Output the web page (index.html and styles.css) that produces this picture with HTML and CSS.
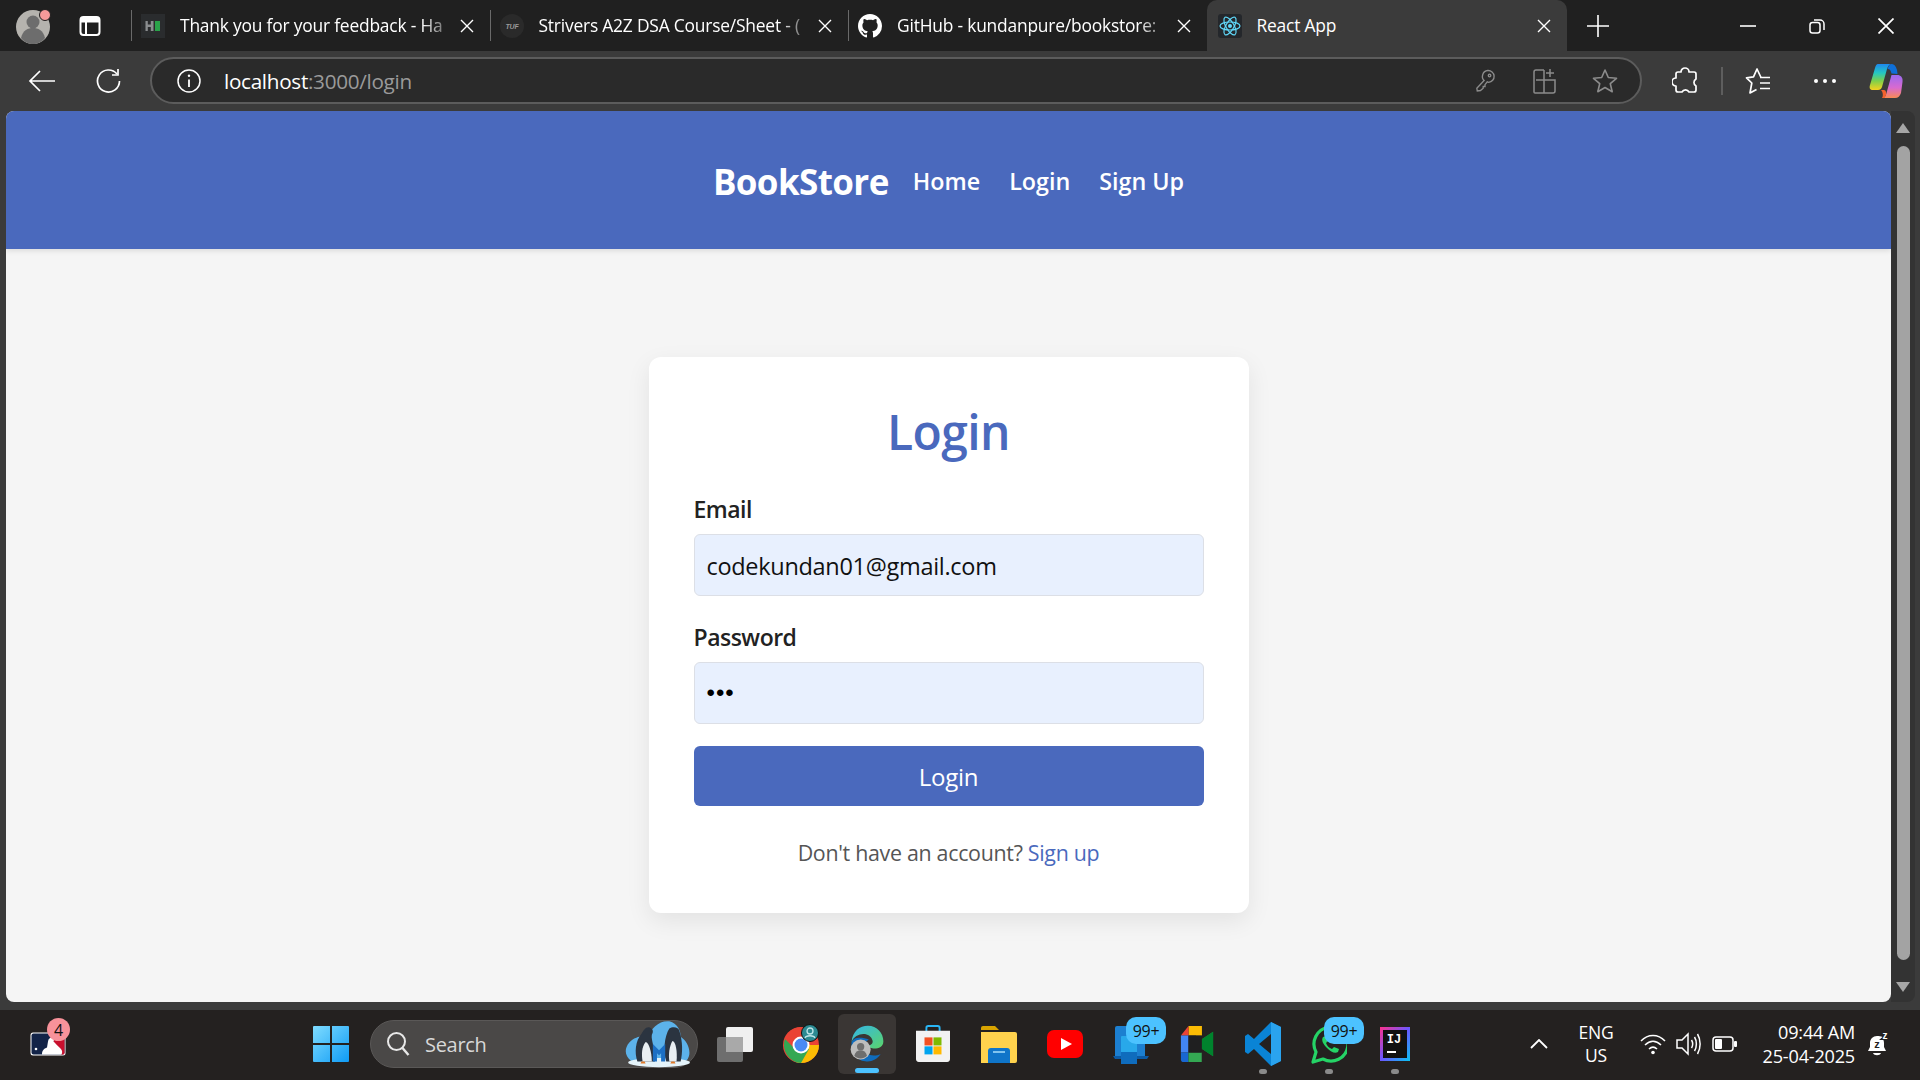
FILE: index.html
```html
<!DOCTYPE html>
<html lang="en">
<head>
<meta charset="utf-8">
<title>React App</title>
<link rel="stylesheet" href="styles.css">
</head>
<body>
<div class="window">
  <div class="tabstrip">
    <div class="profile">
      <svg width="38" height="38" viewBox="0 0 38 38"><circle cx="18" cy="20" r="17" fill="#b5b3ae"/><circle cx="18" cy="15" r="6.500" fill="#6d6d6d"/><path d="M6 31c2-8 7-10 12-10s10 2 12 10c-3 4-8 6-12 6s-9-2-12-6z" fill="#6d6d6d"/><circle cx="30" cy="8" r="5.500" fill="#f69a9a" stroke="#202020"/></svg>
    </div>
    <div class="vtabs"><svg width="24" height="24" viewBox="0 0 24 24" fill="none" stroke="#fff" stroke-width="2"><rect x="2.500" y="3" width="19" height="18" rx="3"/><path d="M8 8v13M3 7.500h18" /><rect x="3" y="3.500" width="18" height="4" fill="#fff" stroke="none"/></svg></div>
    <div class="tabs">
      <div class="tab">
        <svg class="fav" width="24" height="24" viewBox="0 0 24 24"><rect width="24" height="24" fill="#2a2c2e"/><rect x="4.500" y="7" width="8" height="10" fill="#8a8d8f"/><rect x="6.800" y="7" width="3" height="3.500" fill="#2a2c2e"/><rect x="6.800" y="13" width="3" height="4" fill="#2a2c2e"/><rect x="14" y="7" width="5" height="10" fill="#2aa34a"/></svg>
        <span class="tab-title">Thank you for your feedback - Ha</span>
        <svg class="x" width="14" height="14" viewBox="0 0 14 14"><path d="M1 1l12 12M13 1L1 13" stroke="#fff" stroke-width="1.400"/></svg>
      </div>
      <div class="tab">
        <svg class="fav" width="24" height="24" viewBox="0 0 24 24"><circle cx="12" cy="12" r="12" fill="#2a2a2a"/><text x="12" y="15" text-anchor="middle" class="tuf">TUF</text></svg>
        <span class="tab-title">Strivers A2Z DSA Course/Sheet - (</span>
        <svg class="x" width="14" height="14" viewBox="0 0 14 14"><path d="M1 1l12 12M13 1L1 13" stroke="#fff" stroke-width="1.400"/></svg>
      </div>
      <div class="tab">
        <svg class="fav" width="24" height="24" viewBox="0 0 16 16"><path fill="#fff" d="M8 0C3.580 0 0 3.580 0 8c0 3.540 2.290 6.530 5.470 7.590.4.070.55-.17.55-.38 0-.19-.01-.82-.01-1.490-2.010.37-2.530-.49-2.690-.94-.09-.23-.48-.94-.82-1.130-.28-.15-.68-.52-.01-.53.63-.01 1.080.58 1.230.82.720 1.210 1.870.87 2.330.66.070-.52.280-.87.510-1.070-1.780-.2-3.640-.89-3.640-3.950 0-.87.310-1.590.820-2.150-.08-.2-.36-1.020.08-2.120 0 0 .67-.21 2.200.82.640-.18 1.320-.27 2-.27s1.360.09 2 .27c1.530-1.040 2.200-.82 2.200-.82.440 1.100.16 1.920.08 2.120.51.560.82 1.270.82 2.150 0 3.070-1.870 3.750-3.650 3.950.290.250.540.730.540 1.480 0 1.070-.01 1.930-.01 2.200 0 .210.150.460.550.380A8.010 8.010 0 0 0 16 8c0-4.420-3.580-8-8-8z"/></svg>
        <span class="tab-title">GitHub - kundanpure/bookstore:</span>
        <svg class="x" width="14" height="14" viewBox="0 0 14 14"><path d="M1 1l12 12M13 1L1 13" stroke="#fff" stroke-width="1.400"/></svg>
      </div>
      <div class="tab tab-active">
        <svg class="fav" width="24" height="24" viewBox="0 0 24 24"><rect width="24" height="24" rx="3" fill="#24272b"/><g fill="none" stroke="#61dafb" stroke-width="1.200"><ellipse cx="12" cy="12" rx="10" ry="4"/><ellipse cx="12" cy="12" rx="10" ry="4" transform="rotate(60 12 12)"/><ellipse cx="12" cy="12" rx="10" ry="4" transform="rotate(120 12 12)"/></g><circle cx="12" cy="12" r="2" fill="#61dafb"/></svg>
        <span class="tab-title tab-title-full">React App</span>
        <svg class="x" width="14" height="14" viewBox="0 0 14 14"><path d="M1 1l12 12M13 1L1 13" stroke="#fff" stroke-width="1.400"/></svg>
      </div>
    </div>
    <svg class="newtab" width="22" height="22" viewBox="0 0 22 22"><path d="M11 0v22M0 11h22" stroke="#fff" stroke-width="1.600"/></svg>
    <div class="winctl">
      <svg width="16" height="16" viewBox="0 0 16 16"><path d="M0 8h16" stroke="#fff" stroke-width="1.600"/></svg>
      <svg width="16" height="16" viewBox="0 0 16 16" fill="none" stroke="#fff" stroke-width="1.500"><rect x="1" y="4.500" width="10" height="10.500" rx="2.500"/><path d="M5 2h6a4 4 0 0 1 4 4v6"/></svg>
      <svg width="16" height="16" viewBox="0 0 16 16"><path d="M.5.5l15 15M15.500.5l-15 15" stroke="#fff" stroke-width="1.700"/></svg>
    </div>
  </div>

  <div class="toolbar">
    <svg class="tb-back" width="28" height="24" viewBox="0 0 28 24" fill="none" stroke="#fff" stroke-width="1.700"><path d="M27 12H2M12 2L2 12l10 10"/></svg>
    <svg class="tb-reload" width="26" height="26" viewBox="0 0 26 26" fill="none" stroke="#fff" stroke-width="1.700"><path d="M22 6a11 11 0 1 0 2.500 7"/><path d="M23 1v6h-6"/></svg>
    <div class="address">
      <svg width="24" height="24" viewBox="0 0 24 24" fill="none" stroke="#fff" stroke-width="1.500"><circle cx="12" cy="12" r="11"/><path d="M12 10.500V18" stroke-width="1.800"/><circle cx="12" cy="6.800" r="1.200" fill="#fff" stroke="none"/></svg>
      <span class="url"><span class="url-host">localhost</span>:3000/login</span>
      <svg class="addr-icon key" width="20" height="24" viewBox="0 0 22 26" fill="none" stroke="#8c8c8c" stroke-width="1.500"><path d="M14 1.500a6.500 6.500 0 0 1 1 13l-1.500-.500-2.500 3v2H9v2l-3 2.500-3.500.5L2 21l8-8.500a6.500 6.500 0 0 1 4-11z"/><circle cx="16" cy="7" r="1.400"/></svg>
      <svg class="addr-icon split" width="24" height="26" viewBox="0 0 24 26" fill="none" stroke="#8c8c8c" stroke-width="1.500"><path d="M11 2H3a2 2 0 0 0-2 2v20a1 1 0 0 0 1 1h18a2 2 0 0 0 2-2V12H3M11 2v23M17 1v8M13 5h8"/></svg>
      <svg class="addr-icon star" width="26" height="26" viewBox="0 0 26 26" fill="none" stroke="#8c8c8c" stroke-width="1.600"><path d="M13 2l3.300 7.500 8.200.8-6.200 5.400 1.900 8L13 19.500l-7.200 4.200 1.900-8-6.200-5.400 8.200-.8z" stroke-linejoin="round"/></svg>
    </div>
    <svg class="tb-ext" width="26" height="28" viewBox="0 0 26 28" fill="none" stroke="#fff" stroke-width="1.700"><path d="M9 5a4 4 0 0 1 8 0h5a2 2 0 0 1 2 2v5a4 4 0 0 0 0 7v4a2 2 0 0 1-2 2h-5a4 4 0 0 0-7 0H6a2 2 0 0 1-2-2v-4a4 4 0 0 1 0-8V7a2 2 0 0 1 2-2z" stroke-linejoin="round"/></svg>
    <span class="tb-sep"></span>
    <svg class="tb-favs" width="26" height="28" viewBox="0 0 26 28" fill="none" stroke="#fff" stroke-width="1.700"><path d="M16 10.500L12 2 8.500 9.800 1.500 10.800l5.300 5.200L5 26l6.500-3.500" stroke-linejoin="round"/><path d="M15 10.500h10M15 16h10M15 21.500h10"/></svg>
    <span class="tb-dots"><i></i><i></i><i></i></span>
    <svg class="tb-copilot" width="34" height="36" viewBox="0 0 34 36">
      <defs>
        <linearGradient id="cpa" x1="0" y1="0" x2="0" y2="1"><stop offset="0" stop-color="#1e88ee"/><stop offset=".35" stop-color="#25c9c0"/><stop offset=".65" stop-color="#7ed04b"/><stop offset="1" stop-color="#f5d21e"/></linearGradient>
        <linearGradient id="cpb" x1="0" y1="0" x2="0" y2="1"><stop offset="0" stop-color="#9a6af0"/><stop offset=".55" stop-color="#d86ad0"/><stop offset="1" stop-color="#f98a55"/></linearGradient>
      </defs>
      <path d="M9 1h14c-3 0-4 2-5 5l-5 18c-.6 2-2 3-4 3H4c-3 0-4-2-3-5L6 5c.5-2 1.500-4 3-4z" fill="url(#cpa)"/>
      <path d="M14 35h12c3 0 5-2 6-5l1.500-11c.5-4-1-6-4-7h-7l-5 18c-.6 2-1.500 5-3.500 5z" fill="url(#cpb)"/>
      <path d="M23 1c2 0 4 2 5 6l.5 4-6-.5c-.5-3-2-5-4-4.500 1-3 2-5 4.500-5z" fill="#0f6fd8"/>
      <path d="M12 27h3c2 0 2.500 3 2 5l-1.500 3H13c1.500-2 1-6-1-8z" fill="#f2622e"/>
    </svg>
  </div>

  <div class="viewport">
    <main class="page">
      <header class="site-header">
        <span class="brand">BookStore</span>
        <nav class="site-nav">
          <a class="nav-link">Home</a>
          <a class="nav-link">Login</a>
          <a class="nav-link">Sign Up</a>
        </nav>
      </header>
      <section class="content">
        <form class="card">
          <h1 class="card-title">Login</h1>
          <div class="field">
            <label class="field-label">Email</label>
            <div class="input">codekundan01@gmail.com</div>
          </div>
          <div class="field">
            <label class="field-label">Password</label>
            <div class="input input-pass">•••</div>
          </div>
          <div class="submit">Login</div>
          <p class="switch">Don't have an account? <a class="switch-link">Sign up</a></p>
        </form>
      </section>
    </main>
    <aside class="scrollbar">
      <span class="arrow-up"></span>
      <span class="thumb"></span>
      <span class="arrow-down"></span>
    </aside>
  </div>

  <div class="taskbar">
    <div class="widget">
      <svg width="36" height="24" viewBox="0 0 36 24"><rect x=".5" y=".5" width="35" height="23" rx="2.500" fill="#fff"/><rect x="1.500" y="1.500" width="33" height="21" rx="2" fill="#132448"/><path d="M22 1.500h11a1.500 1.500 0 0 1 1.500 1.500v18a1.500 1.500 0 0 1-1.500 1.500h-2c-1-5-5-7-7-10z" fill="#c8102e"/><path d="M12 22.500c0-4 2-6 5-7l1-6c.5-3 2-4 4-4s2.500 2 1.500 4c2 2 4 4 7 7 2 2 2 4 1 6z" fill="#fff"/><circle cx="6" cy="17" r="1.300" fill="#fff"/></svg>
      <span class="widget-badge">4</span>
    </div>
    <div class="task-center">
      <svg class="start" width="36" height="36" viewBox="0 0 36 36"><defs><linearGradient id="wn" x1="0" y1="0" x2="1" y2="1"><stop offset="0" stop-color="#7fdcff"/><stop offset="1" stop-color="#0f9bf5"/></linearGradient></defs><path d="M0 1a1 1 0 0 1 1-1h16v17H0zM19 0h16a1 1 0 0 1 1 1v16H19zM0 19h17v17H1a1 1 0 0 1-1-1zM19 19h17v16a1 1 0 0 1-1 1H19z" fill="url(#wn)"/></svg>
      <div class="search">
        <svg width="24" height="26" viewBox="0 0 24 26" fill="none" stroke="#e8e8e8" stroke-width="2"><circle cx="10.500" cy="10.500" r="8.500"/><path d="M16.500 17l6 7" stroke-width="2.400"/></svg>
        <span class="search-text">Search</span>
        <svg class="search-art" width="68" height="50" viewBox="0 0 66 48"><path d="M3 36c-4-7 2-16 9-18 4-2 8-2 11 0 3-9 11-17 21-16 8 2 11 9 11 15 6 4 10 12 8 19-2 8-12 9-30 9S7 43 3 36z" fill="#5cb2ea"/><ellipse cx="34" cy="42" rx="30" ry="4.500" fill="#e4f3fa"/><path d="M13 41c-3-9-2-20 4-27 2-3 4-7 8-6 3 1 4 4 2 7-1 6 4 14 3 26z" fill="#2b3440"/><path d="M18 41c-1-7-1-14 3-19 3 0 6 10 6 19z" fill="#e8eef2"/><path d="M41 41c-3-10-2-24 3-32 3-2 9-2 10 3 3 10 3 20 1 29z" fill="#2b3440"/><path d="M44 41c-1-7 0-15 3-20 3 0 5 10 4 20z" fill="#e8eef2"/><path d="M28 24l6 6 6-6v17h-4v-8l-2 2-2-2v8h-4z" fill="#1c6fc4"/><path d="M16 43h5l-1-2h-3zM45 43h5l-1-2h-3z" fill="#e07a2a"/></svg>
      </div>
      <div class="apps">
        <div class="app"><svg width="36" height="36" viewBox="0 0 36 36"><rect x="0" y="11" width="26" height="25" rx="2" fill="#6e6e6e"/><rect x="9" y="1" width="27" height="25" rx="2" fill="#f0f0f0"/><path d="M9 11h17v15H9z" fill="#a9a9a9"/></svg></div>
        <div class="app"><svg width="36" height="40" viewBox="0 0 36 40"><circle cx="18" cy="21" r="18" fill="#ea4335"/><path d="M18 39a18 18 0 0 0 18-18H18l-8 14c2 3 5 4 8 4z" fill="#fbbc04"/><path d="M18 39l8-14-16-2-8-8a18 18 0 0 0 16 24z" fill="#34a853" /><path d="M2 14a18 18 0 0 1 16-11v18z" fill="#ea4335"/><circle cx="18" cy="21" r="8.500" fill="#fff"/><circle cx="18" cy="21" r="6.500" fill="#4a8af4"/><circle cx="27" cy="9" r="8.500" fill="#2c8a92" stroke="#111" stroke-width="1"/><circle cx="27" cy="7" r="3" fill="none" stroke="#bfe6ea" stroke-width="1.300"/><path d="M22 14c1-3 9-3 10 0" fill="none" stroke="#bfe6ea" stroke-width="1.300"/></svg></div>
        <div class="app app-active"><svg width="34" height="40" viewBox="0 0 36 44"><defs><linearGradient id="eg1" x1="0" y1="0" x2="1" y2="1"><stop offset="0" stop-color="#33b6e8"/><stop offset="1" stop-color="#5bd46a"/></linearGradient></defs><path d="M1 20C2 8 10 2 19 2c10 0 17 8 17 17 0 6-5 8-10 8-3 0-6-1-6-3 3-1 5-3 4-6-1-4-5-7-10-7S3 14 1 20z" fill="url(#eg1)"/><path d="M1 20c-1 10 5 20 15 21 7 1 13-2 17-8-4 2-11 3-15-1-4-3-6-10 2-15C12 14 3 14 1 20z" fill="#0f6cbd"/><circle cx="11" cy="28" r="11" fill="#bdbdbd"/><circle cx="11" cy="25" r="4" fill="#6e6e6e"/><path d="M4 35c1-4 4-6 7-6s6 2 7 6c-4 4-10 4-14 0z" fill="#6e6e6e"/></svg><span class="app-indicator"></span></div>
        <div class="app"><svg width="34" height="38" viewBox="0 0 36 40"><path d="M11 8V3a2 2 0 0 1 2-2h10a2 2 0 0 1 2 2v5" fill="none" stroke="#29b6f6" stroke-width="2"/><path d="M0 6h36v30a3 3 0 0 1-3 3H3a3 3 0 0 1-3-3z" fill="#f2f2f2"/><rect x="9" y="13" width="8.500" height="8.500" fill="#f25022"/><rect x="18.500" y="13" width="8.500" height="8.500" fill="#7fba00"/><rect x="9" y="22.500" width="8.500" height="8.500" fill="#00a4ef"/><rect x="18.500" y="22.500" width="8.500" height="8.500" fill="#ffb900"/></svg></div>
        <div class="app"><svg width="36" height="38" viewBox="0 0 36 38"><path d="M0 3a2 2 0 0 1 2-2h12l4 4H0z" fill="#d9a400"/><path d="M0 7h34a2 2 0 0 1 2 2v27a2 2 0 0 1-2 2H0z" fill="#ffd24d"/><path d="M7 38V26a3 3 0 0 1 3-3h16a3 3 0 0 1 3 3v12z" fill="#0f75c9"/><path d="M12 27h12" stroke="#7fc4ef" stroke-width="2"/></svg></div>
        <div class="app"><svg width="36" height="28" viewBox="0 0 36 28"><rect width="36" height="28" rx="7" fill="#f00"/><path d="M14 8l11 6-11 6z" fill="#fff"/></svg></div>
        <div class="app"><svg width="36" height="40" viewBox="0 0 36 40"><path d="M2 4a2 2 0 0 1 2-2h26a2 2 0 0 1 2 2v28H2z" fill="#1c7fd0"/><path d="M0 32h36l-2 3H2z" fill="#0b5aa5"/><rect x="8" y="12" width="16" height="28" rx="1" fill="#28a8ea"/><rect x="8" y="28" width="16" height="12" fill="#0f6cbd"/></svg><span class="count">99+</span></div>
        <div class="app"><svg width="34" height="36" viewBox="0 0 34 38"><path d="M8 0h14v10H8z" fill="#fbbc04"/><path d="M0 10L8 0v10z" fill="#ea4335"/><path d="M0 10h8v18H0z" fill="#4285f4"/><path d="M0 28h8v10H3a3 3 0 0 1-3-3z" fill="#1967d2"/><path d="M8 28h14v10H8z" fill="#34a853"/><path d="M22 0v14l12-8v26l-12-8v14z" fill="#1f8e3e"/><path d="M22 14l12-8v26l-12-8z" fill="#00832d"/><path d="M22 0v10H16V0z" fill="#fbbc04"/><rect x="8" y="10" width="14" height="18" fill="#1f1f20"/></svg></div>
        <div class="app app-run"><svg width="36" height="44" viewBox="0 0 36 44"><path d="M26 0l10 5v34l-10 5L9 27 3 32l-3-2V14l3-2 6 5zM26 12L14 22l12 10z" fill="#0a84d6"/><path d="M26 0l10 5v34l-10 5z" fill="#2aa3ee"/></svg></div>
        <div class="app app-run"><svg width="36" height="40" viewBox="0 0 36 40" fill="none"><path d="M2 38l3-10A17 17 0 1 1 12 35z" stroke="#25d366" stroke-width="3.200" stroke-linejoin="round"/><path d="M12 13c-2 3 0 7 4 11s8 6 11 4l1-3-5-2-2 2c-3-1-5-3-6-6l2-2-2-5z" fill="#25d366"/></svg><span class="count count-wa">99+</span></div>
        <div class="app app-run"><svg width="30" height="34" viewBox="0 0 30 34"><defs><linearGradient id="ij" x1="0" y1="0" x2="1" y2="1"><stop offset="0" stop-color="#ff318c"/><stop offset=".5" stop-color="#6b57ff"/><stop offset="1" stop-color="#07c3f2"/></linearGradient></defs><rect width="30" height="34" fill="url(#ij)"/><rect x="3" y="3" width="24" height="28" fill="#111"/><text x="14" y="16" text-anchor="middle" class="ij">IJ</text><rect x="7" y="24" width="9" height="2" fill="#fff"/></svg></div>
      </div>
    </div>
    <div class="tray">
      <svg class="tray-up" width="18" height="10" viewBox="0 0 18 10" fill="none" stroke="#fff" stroke-width="1.800"><path d="M1 9l8-8 8 8"/></svg>
      <div class="lang"><span>ENG</span><span>US</span></div>
      <svg class="tray-wifi" width="26" height="22" viewBox="0 0 26 22" fill="none" stroke="#fff" stroke-width="1.500"><path d="M1 8c7-7.500 17-7.500 24 0M5 12c5-5 11-5 16 0M9 16c2.500-2.500 5.500-2.500 8 0"/><circle cx="13" cy="19.500" r="1.800" fill="#fff" stroke="none"/></svg>
      <svg class="tray-vol" width="26" height="24" viewBox="0 0 26 24" fill="none" stroke="#fff" stroke-width="1.500"><path d="M1 8h5l6-6v20l-6-6H1zM15.500 8c1.500 2.500 1.500 5.500 0 8M18.500 5c2.500 4 2.500 10 0 14M21.500 2c3.500 6 3.500 14 0 20"/></svg>
      <svg class="tray-bat" width="26" height="16" viewBox="0 0 26 16"><rect x="1" y="1" width="20" height="14" rx="3" fill="none" stroke="#fff" stroke-width="1.500"/><rect x="3" y="3" width="7" height="10" rx="1" fill="#fff"/><rect x="22" y="5" width="3" height="6" rx="1" fill="#fff"/></svg>
      <div class="clock"><span>09:44 AM</span><span>25-04-2025</span></div>
      <svg class="tray-bell" width="22" height="28" viewBox="0 -2 22 28"><path d="M9 4c-4 0-7 3-7 7v4l-2 4h18l-2-4v-4c0-1-.2-2-.6-3H11L14.500 5C13 4.300 11 4 9 4z" fill="#fff"/><path d="M5 21c1 3 7 3 8 0z" fill="#fff"/><text x="9" y="16" text-anchor="middle" class="zz">z</text><text x="17" y="7" text-anchor="middle" class="zz-w">z</text></svg>
    </div>
  </div>
</div>
</body>
</html>
```
FILE: styles.css
```css
* { box-sizing: border-box; }
html, body { margin: 0; height: 100%; overflow: hidden; }
body { font-family: "Open Sans", "Noto Sans", "Liberation Sans", sans-serif; background: #3b3b3b; color: #fff; }
svg { display: block; flex: none; }
.window { width: 1920px; height: 1080px; display: flex; flex-direction: column; }

/* tab strip */
.tabstrip { height: 51px; background: #202020; display: flex; align-items: center; position: relative; }
.profile { width: 38px; margin-left: 15px; }
.vtabs { margin-left: 25px; }
.tabs { display: flex; margin-left: 29px; height: 51px; }
.tab { width: 358.500px; height: 51px; display: flex; align-items: center; padding: 0 16px 0 10px; position: relative; font-size: 17.400px; letter-spacing: -0.2px; }
.tab:not(.tab-active)::before { content: ""; position: absolute; left: 0; top: 10px; bottom: 10px; width: 1px; background: #6a6a6a; }
.fav { margin-right: 15px; margin-left: 0; }
.tab-title { flex: 1; overflow: hidden; white-space: nowrap; padding-bottom: 2px; -webkit-mask-image: linear-gradient(90deg, #000 90%, rgba(0,0,0,.25) 100%); mask-image: linear-gradient(90deg, #000 90%, rgba(0,0,0,.25) 100%); }
.tab-title-full { -webkit-mask-image: none; mask-image: none; }
.tab .x { margin-left: 12px; }
.tab-active { background: #3b3b3b; border-radius: 10px 10px 0 0; padding-left: 11px; width: 360px; }
.tuf { font: italic 700 7px "Liberation Sans", sans-serif; fill: #9a9a9a; }
.newtab { margin-left: 20px; }
.winctl { margin-left: auto; display: flex; gap: 53px; padding-right: 26px; }

/* toolbar */
.toolbar { height: 60px; background: #3b3b3b; display: flex; align-items: center; padding-left: 28px; }
.tb-reload { margin-left: 39px; }
.address { width: 1492px; margin-left: 29px; height: 47px; border: 2px solid #5c5c5c; border-radius: 24px; background: #2a2a2a; display: flex; align-items: center; padding-left: 25px; margin-top: -1px; }
.url { margin-left: 23px; font-size: 20.700px; letter-spacing: -0.3px; color: #9a9a9a; }
.url-host { color: #fff; }
.addr-icon.key { margin-left: auto; }
.addr-icon.split { margin-left: 38px; }
.addr-icon.star { margin-left: 35px; margin-right: 22px; }
.tb-ext { margin-left: 30px; }
.tb-sep { width: 2px; height: 28px; background: #5e5e5e; margin-left: 23px; }
.tb-favs { margin-left: 22px; }
.tb-dots { display: flex; gap: 5px; margin-left: 43px; }
.tb-dots i { width: 4px; height: 4px; border-radius: 50%; background: #fff; }
.tb-copilot { margin-left: 33px; }

/* viewport */
.viewport { height: 891px; margin: 0 5px 0 6px; display: flex; }
.page { flex: 1; background: #f5f5f5; border-radius: 8px; overflow: hidden; display: flex; flex-direction: column; }
.site-header { height: 138px; background: #4a69bd; box-shadow: 0 2px 5px rgba(0,0,0,.1); display: flex; justify-content: center; align-items: center; gap: 24px; padding-top: 2px; position: relative; }
.brand { font-size: 35px; font-weight: 700; letter-spacing: -0.6px; color: #fff; }
.site-nav { display: flex; gap: 29px; }
.nav-link { font-size: 23.300px; font-weight: 600; color: #fff; }
.content { flex: 1; display: flex; justify-content: center; padding-top: 108px; }
.card { width: 600px; height: 556px; background: #fff; border-radius: 12px; box-shadow: 0 8px 24px rgba(0,0,0,.08); padding: 0 45px; display: flex; flex-direction: column; }
.card-title { margin: 39px 0 0; height: 72px; line-height: 72px; font-size: 48px; font-weight: 600; text-align: center; color: #4a69bd; letter-spacing: -0.6px; }
.field { display: flex; flex-direction: column; }
.field + .field { margin-top: 25px; }
.field-label { height: 33px; margin: 25px 0 8px; line-height: 33px; font-size: 23px; font-weight: 600; letter-spacing: -0.5px; color: #222; }
.field + .field .field-label { margin-top: 0; }
.input { height: 62px; background: #e8f0fe; border: 1px solid #dcdfe6; border-radius: 6px; padding: 2px 12px 0; display: flex; align-items: center; font-size: 23.500px; letter-spacing: -0.3px; color: #111; }
.input-pass { font-family: "Liberation Sans", sans-serif; font-size: 24px; letter-spacing: 1px; color: #000; padding-top: 0; }
.submit { height: 60px; margin-top: 22px; background: #4a69bd; border-radius: 6px; display: flex; align-items: center; justify-content: center; font-size: 24px; letter-spacing: -0.3px; color: #fff; }
.switch { margin: 32px 0 0; text-align: center; font-size: 21.400px; letter-spacing: -0.3px; color: #555; }
.switch-link { color: #4a69bd; }

/* scrollbar */
.scrollbar { width: 24px; background: #333; border-radius: 0 8px 8px 0; display: flex; flex-direction: column; align-items: center; padding: 12px 0 10px 0; }
.arrow-up { width: 0; height: 0; border: 7px solid transparent; border-top: 0; border-bottom: 10px solid #a6a6a6; }
.thumb { width: 13px; flex: 1; background: #a3a3a3; border-radius: 7px; margin: 13px 0 22px; }
.arrow-down { width: 0; height: 0; border: 7px solid transparent; border-bottom: 0; border-top: 10px solid #a6a6a6; }

/* taskbar */
.taskbar { flex: 1; height: 70px; background: #242120; display: flex; align-items: center; position: relative; box-shadow: inset 0 8px 0 #3b3b3b; padding-top: 6px; }
.widget { margin-left: 30px; position: relative; }
.widget-badge { position: absolute; left: 17px; top: -14px; width: 23px; height: 23px; border-radius: 50%; background: #f8929a; color: #111; font-size: 16px; display: flex; align-items: center; justify-content: center; }
.task-center { display: flex; align-items: center; margin-left: 247px; }
.search { width: 328px; height: 48px; margin-left: 21px; border-radius: 24px; background: #4a4847; border: 1px solid #5a5857; display: flex; align-items: center; padding-left: 15px; position: relative; }
.search-text { margin-left: 15px; font-size: 20px; color: #d8d8d8; letter-spacing: -0.3px; }
.search-art { margin-left: auto; margin-right: 5px; }
.apps { display: flex; margin-left: 4px; }
.app { width: 66px; height: 60px; display: flex; align-items: center; justify-content: center; position: relative; }
.app-active { background: #3a3634; border-radius: 6px; width: 58px; margin: 0 4px; }
.app-indicator { position: absolute; bottom: 1px; left: 17px; width: 24px; height: 5px; border-radius: 3px; background: #4cc2ff; }
.app-run::after { content: ""; position: absolute; left: 29px; bottom: 0; width: 8px; height: 5px; border-radius: 3px; background: #8a8a8a; }
.count { position: absolute; left: 28px; top: 3px; width: 40px; height: 27px; border-radius: 10px; background: #4cc2ff; color: #111; font-size: 16px; letter-spacing: -0.3px; display: flex; align-items: center; justify-content: center; }
.ij { font: 700 12px "Liberation Mono", monospace; fill: #fff; }
.zz { font: 700 11px "Liberation Sans", sans-serif; fill: #242120; }
.zz-w { font: 700 10px "Liberation Sans", sans-serif; fill: #fff; }
.tray { margin-left: auto; display: flex; align-items: center; padding-right: 30px; }
.tray-up { margin-right: 28px; margin-left: 1px; }
.lang { display: flex; flex-direction: column; align-items: center; font-size: 17.500px; line-height: 23px; letter-spacing: -0.2px; width: 40px; }
.tray-wifi { margin-left: 24px; }
.tray-vol { margin-left: 10px; }
.tray-bat { margin-left: 10px; }
.clock { display: flex; flex-direction: column; align-items: flex-end; font-size: 18.100px; line-height: 24px; letter-spacing: -0.2px; width: 117px; margin-right: -1px; }
.tray-bell { margin-left: 14px; }
```
